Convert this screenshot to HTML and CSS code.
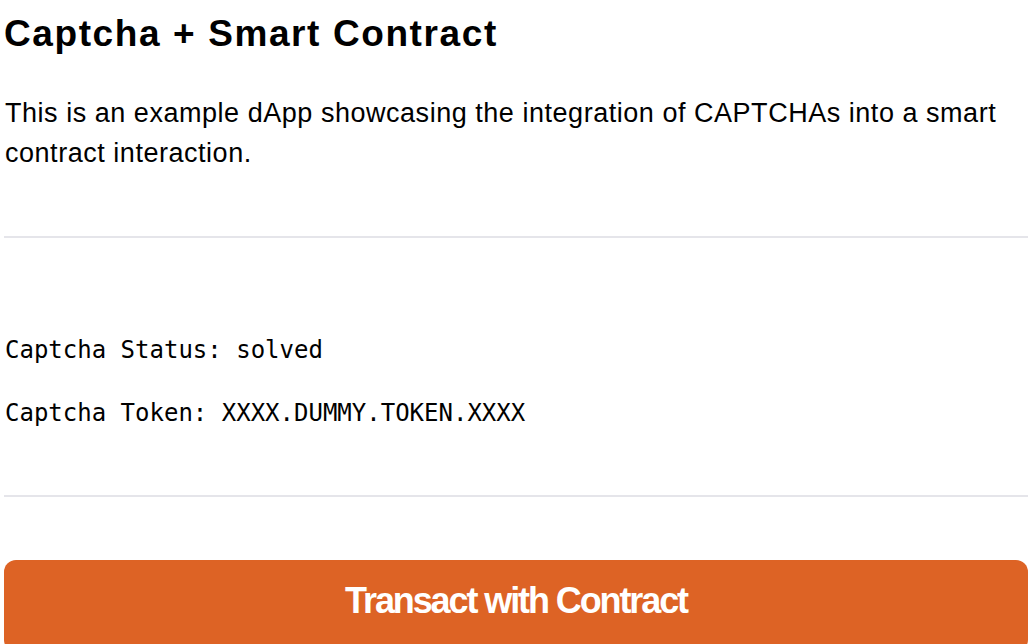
FILE: index.html
```html
<!DOCTYPE html>
<html lang="en">
<head>
<meta charset="utf-8">
<title>Captcha + Smart Contract</title>
<link rel="stylesheet" href="styles.css">
</head>
<body>
<main class="page">
  <h1 class="title">Captcha + Smart Contract</h1>
  <p class="intro">This is an example dApp showcasing the integration of CAPTCHAs into a smart contract interaction.</p>
  <hr class="divider divider-top">
  <section class="status">
    <p class="status-line">Captcha Status: solved</p>
    <p class="status-line">Captcha Token: XXXX.DUMMY.TOKEN.XXXX</p>
  </section>
  <hr class="divider divider-bottom">
  <button class="cta" type="button">Transact with Contract</button>
</main>
</body>
</html>
```
FILE: styles.css
```css
html, body {
  margin: 0;
  padding: 0;
  background: #ffffff;
}

body {
  font-family: "Liberation Sans", Arial, sans-serif;
  color: #000000;
}

.page {
  padding: 0 4px;
  display: flex;
  flex-direction: column;
}

.title {
  margin: 0;
  padding-top: 13px;
  font-size: 37px;
  line-height: 42px;
  font-weight: 700;
  letter-spacing: 1.6px;
}

.intro {
  margin: 38px 0 0;
  font-size: 27px;
  letter-spacing: 0.53px;
  line-height: 40px;
  padding-left: 1px;
}

.divider {
  margin: 0;
  border: 0;
  height: 2px;
  background: #e5e5ea;
}

.divider-top {
  margin-top: 63px;
}

.status {
  margin-top: 97px;
  display: flex;
  flex-direction: column;
  gap: 33px;
}

.status-line {
  margin: 0;
  font-family: "DejaVu Sans Mono", "Liberation Mono", monospace;
  font-size: 24px;
  line-height: 30px;
  padding-left: 1px;
}

.divider-bottom {
  margin-top: 67px;
}

.cta {
  margin-top: 63px;
  border: 0;
  border-radius: 12px;
  background: #dd6325;
  color: #ffffff;
  font-family: "Liberation Sans", Arial, sans-serif;
  font-weight: 700;
  font-size: 36px;
  letter-spacing: -2.1px;
  line-height: 42px;
  padding: 20px 0 30px;
  width: 100%;
  text-align: center;
  cursor: pointer;
}
```
